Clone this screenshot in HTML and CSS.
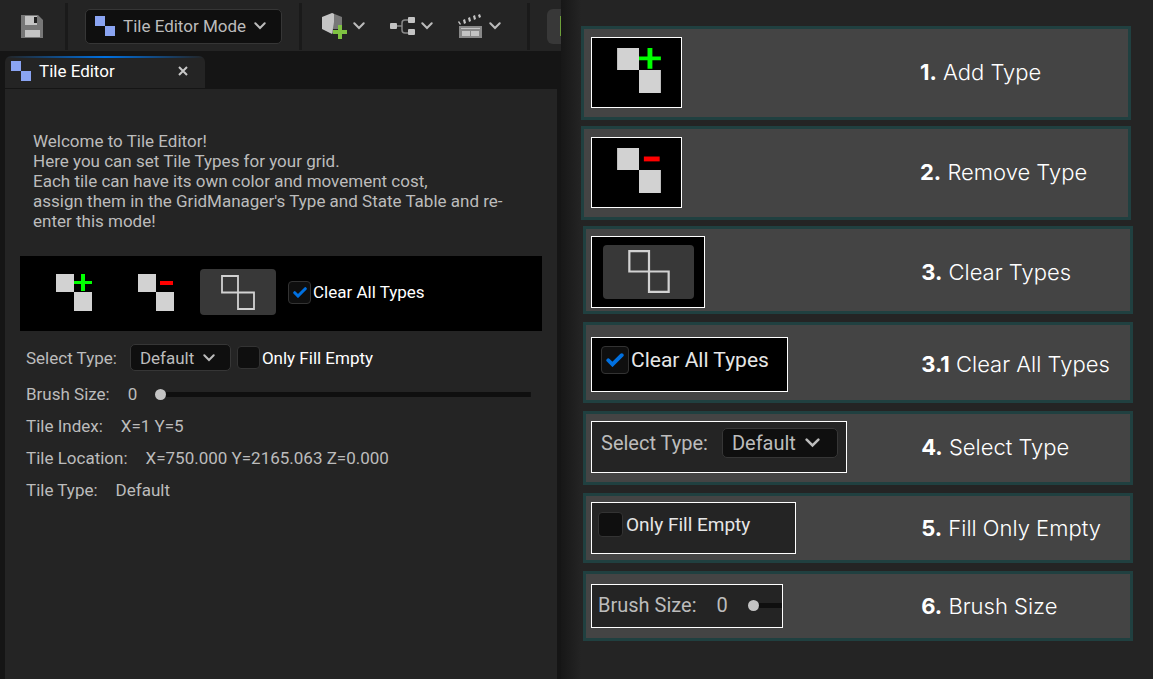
FILE: index.html
```html
<!DOCTYPE html>
<html lang="en">
<head>
<meta charset="utf-8">
<title>Tile Editor</title>
<link rel="stylesheet" href="styles.css">
</head>
<body>
<svg class="defs" aria-hidden="true">
  <symbol id="chevron" viewBox="0 0 12 8"><path d="M1.3 1.3 6 6l4.700-4.700" fill="none" stroke="currentColor" stroke-width="2" stroke-linecap="round"/></symbol>
  <symbol id="check" viewBox="0 0 14 11"><path d="M1.700 5.700 5 9l7.300-7.300" fill="none" stroke="#0070e0" stroke-width="3" stroke-linecap="round"/></symbol>
  <symbol id="tiles" viewBox="0 0 20 20"><path d="M0 0h10v10H0zM10 10h10v10H10z" fill="#8aa4f2"/></symbol>
  <symbol id="add" viewBox="0 0 36 37"><path d="M0 0h18v18H0zM18 18h18v19H18z" fill="#d2d2d2"/><path d="M25 0h4v7h7v3h-7v7h-4v-7h-7V7h7z" fill="#0f0"/></symbol>
  <symbol id="remove" viewBox="0 0 36 37"><path d="M0 0h18v18H0zM18 18h18v19H18z" fill="#d2d2d2"/><path d="M22 7h13v4H22z" fill="#f00"/></symbol>
  <symbol id="clear" viewBox="0 0 34 35"><path d="M1 1h16v16.500H1zM17 17.500h16V34H17z" fill="none" stroke="#d2d2d2" stroke-width="1.800"/></symbol>
</svg>
<div class="screen">
  <main class="editor">
    <header class="toolbar">
      <button class="tool save" aria-label="Save">
        <svg width="22" height="23" viewBox="0 0 22 23"><path d="M0 0h17l5 5v18H0z" fill="#777"/><path d="M4 1h12v9H4zM4 15h15v7H4z" fill="#c4c4c4"/><path d="M13 2h3v6h-3z" fill="#202020"/></svg>
      </button>
      <span class="divider"></span>
      <button class="mode">
        <svg width="20" height="20"><use href="#tiles"/></svg>
        <span>Tile Editor Mode</span>
        <svg width="12" height="8"><use href="#chevron"/></svg>
      </button>
      <span class="divider"></span>
      <div class="tools">
        <button class="tool" aria-label="Add to project">
          <svg width="26" height="26" viewBox="0 0 26 26"><path d="M10 0 20 4v8h-4v4h-5v4l-1 1V9z" fill="#777"/><path d="M0 4 10 0l2 1v8l-2 12-10-5z" fill="#c4c4c4"/><path d="M16 12h4v5h5v4h-5v5h-4v-5h-5v-4h5z" fill="#7fc242"/></svg>
          <svg width="12" height="8"><use href="#chevron"/></svg>
        </button>
        <button class="tool" aria-label="Blueprints">
          <svg width="26" height="20" viewBox="0 0 26 20"><path d="M7 10h5M18 4h-3q-3 0-3 3v7q0 3 3 3h3" fill="none" stroke="#888" stroke-width="1.500"/><rect y="7" width="7" height="6" rx="1" fill="#c4c4c4"/><rect x="18" y="1" width="7" height="6" rx="1" fill="#c4c4c4"/><rect x="18" y="13" width="7" height="6" rx="1" fill="#c4c4c4"/></svg>
          <svg width="12" height="8"><use href="#chevron"/></svg>
        </button>
        <button class="tool" aria-label="Cinematics">
          <svg width="26" height="26" viewBox="0 0 26 26"><path d="M1 13h23v12H1z" fill="#888"/><path d="M3 15h19v1H3zM4 18h8v5H4zM13 18h8v5h-8z" fill="#c4c4c4"/><path d="M0 9l1-1 2 3-1 1zM5 7l2-1 1 4-2 1zM10 5l2-1 1 4-2 1zM15 3l2-1 1 4-2 1zM20 2l2-1 1 3-2 1z" fill="#c4c4c4"/></svg>
          <svg width="12" height="8"><use href="#chevron"/></svg>
        </button>
      </div>
      <span class="divider"></span>
      <button class="play" aria-label="Play"></button>
    </header>
    <nav class="tabs">
      <div class="tab">
        <svg width="20" height="20"><use href="#tiles"/></svg>
        <span>Tile Editor</span>
        <button class="close" aria-label="Close tab"><svg width="10" height="10" viewBox="0 0 10 10"><path d="M1 1l8 8M9 1l-8 8" stroke="#c8c8c8" stroke-width="2"/></svg></button>
      </div>
    </nav>
    <section class="panel">
      <p class="intro">Welcome to Tile Editor!<br>Here you can set Tile Types for your grid.<br>Each tile can have its own color and movement cost,<br>assign them in the GridManager's Type and State Table and re-<br>enter this mode!</p>
      <div class="actions">
        <button class="action" aria-label="Add type"><svg width="36" height="37"><use href="#add"/></svg></button>
        <button class="action" aria-label="Remove type"><svg width="36" height="37"><use href="#remove"/></svg></button>
        <button class="action active" aria-label="Clear types"><svg width="34" height="35"><use href="#clear"/></svg></button>
        <label class="check"><span class="box"><input type="checkbox" checked><svg width="14" height="11"><use href="#check"/></svg></span>Clear All Types</label>
      </div>
      <div class="row select-row">
        <label for="type">Select Type:</label>
        <span class="drop"><select id="type"><option>Default</option></select><svg width="12" height="8"><use href="#chevron"/></svg></span>
        <label class="check"><span class="box"><input type="checkbox"></span>Only Fill Empty</label>
      </div>
      <div class="row"><label for="brush">Brush Size:</label><output>0</output><input class="slider" id="brush" type="range" min="0" max="10" value="0"></div>
      <div class="row"><span>Tile Index:</span><span>X=1 Y=5</span></div>
      <div class="row"><span>Tile Location:</span><span>X=750.000 Y=2165.063 Z=0.000</span></div>
      <div class="row"><span>Tile Type:</span><span>Default</span></div>
    </section>
  </main>
  <aside class="guide">
    <article class="card tall early">
      <div class="thumb icon black"><svg width="44" height="45"><use href="#add"/></svg></div>
      <h2><b>1.</b> Add Type</h2>
    </article>
    <article class="card tall early">
      <div class="thumb icon black"><svg width="44" height="45"><use href="#remove"/></svg></div>
      <h2><b>2.</b> Remove Type</h2>
    </article>
    <article class="card clear-card">
      <div class="thumb black pressed"><button class="action active" aria-label="Clear types"><svg width="42" height="43"><use href="#clear"/></svg></button></div>
      <h2><b>3.</b> Clear Types</h2>
    </article>
    <article class="card all-card">
      <div class="thumb black all"><label class="check"><span class="box"><input type="checkbox" checked><svg width="18" height="14"><use href="#check"/></svg></span>Clear All Types</label></div>
      <h2><b>3.1</b> Clear All Types</h2>
    </article>
    <article class="card select-card">
      <div class="thumb pick"><label for="type2">Select Type:</label><span class="drop"><select id="type2"><option>Default</option></select><svg width="15" height="10"><use href="#chevron"/></svg></span></div>
      <h2><b>4.</b> Select Type</h2>
    </article>
    <article class="card">
      <div class="thumb fill"><label class="check"><span class="box"><input type="checkbox"></span>Only Fill Empty</label></div>
      <h2><b>5.</b> Fill Only Empty</h2>
    </article>
    <article class="card">
      <div class="thumb brush"><label for="brush2">Brush Size:</label><output>0</output><input class="slider" id="brush2" type="range" min="0" max="10" value="0"></div>
      <h2><b>6.</b> Brush Size</h2>
    </article>
  </aside>
</div>
</body>
</html>
```
FILE: styles.css
```css
* { box-sizing: border-box; }
body {
  margin: 0;
  background: #242424;
  color: #bcbcbc;
  font: 17px/20px Roboto, "Liberation Sans", sans-serif;
}
button, select, input { margin: 0; font: inherit; color: inherit; }
button { padding: 0; border: 0; background: none; }
svg { display: block; flex: none; }
.defs { position: absolute; width: 0; height: 0; }

.screen {
  display: grid;
  grid-template-columns: 561fr 592fr;
  min-height: 100vh;
}
.editor {
  display: flex;
  flex-direction: column;
  min-width: 0;
  background: #151515;
  overflow: hidden;
}

.toolbar {
  display: flex;
  align-items: center;
  height: 51px;
  padding-top: 1px;
  background: #242424;
}
.divider { flex: none; width: 3px; height: 47px; background: #1a1a1a; }
.tool { display: flex; align-items: center; gap: 5px; }
.save { margin: 0 22px 0 21px; }
.mode {
  display: flex;
  align-items: center;
  gap: 8px;
  height: 35px;
  margin: 0 17px;
  padding: 0 15px 0 9px;
  border: 1px solid #363636;
  border-radius: 5px;
  background: #0f0f0f;
  white-space: nowrap;
}
.tools { display: flex; align-items: center; gap: 25px; margin: 0 26px 0 20px; }
.play {
  flex: 1;
  height: 35px;
  margin-left: 17px;
  border-radius: 6px 0 0 6px;
  background: linear-gradient(#6da03a, #6da03a) right / 1px 20px no-repeat #383838;
}

.tabs { padding: 5px 5px 1px; }
.tab {
  display: flex;
  align-items: center;
  gap: 8px;
  width: 200px;
  height: 32px;
  padding: 0 17px 2px 6px;
  border-radius: 6px 6px 0 0;
  background: linear-gradient(90deg, #242424, #0070e0 50%, #242424) top / 100% 2px no-repeat #242424;
  color: #fff;
}
.close { margin-left: auto; }

.panel {
  flex: 1;
  margin: 0 4px 0 5px;
  padding: 42px 15px 20px;
  background: #242424;
}
.intro { margin: 0 0 25px; padding: 0 13px; }
.actions {
  display: flex;
  align-items: center;
  gap: 6px;
  height: 75px;
  margin-bottom: 13px;
  padding: 0 0 3px 16px;
  background: #000;
}
.action {
  display: grid;
  place-items: center;
  width: 76px;
  height: 46px;
  border-radius: 4px;
}
.action.active { background: #383838; }
.actions .check { margin-left: 6px; }
.check { display: flex; align-items: center; gap: 2px; color: #fff; white-space: nowrap; }
.box, .drop { display: grid; align-items: center; }
.box > *, .drop > * { grid-area: 1 / 1; }
.box { justify-items: center; }
.box svg, .drop svg { pointer-events: none; z-index: 1; }
.box input {
  width: 23px;
  height: 23px;
  appearance: none;
  border: 1px solid #333;
  border-radius: 4px;
  background: #0f0f0f;
}
.drop select {
  width: 101px;
  height: 27px;
  padding: 0 9px;
  appearance: none;
  border: 1px solid #363636;
  border-radius: 5px;
  background: #0f0f0f;
}
.drop svg { justify-self: end; margin-right: 16px; }

.row {
  display: flex;
  align-items: center;
  gap: 18px;
  min-height: 32px;
  padding: 0 11px 0 6px;
  white-space: nowrap;
}
.select-row { gap: 6px; min-height: 27px; margin-bottom: 7px; }
.select-row > label:first-child { margin-right: 7px; }

.slider {
  flex: 1;
  min-width: 0;
  height: 12px;
  appearance: none;
  background: linear-gradient(#0f0f0f, #0f0f0f) center / 100% 5px no-repeat;
}
.slider::-webkit-slider-thumb {
  width: 11px;
  height: 11px;
  appearance: none;
  border-radius: 50%;
  background: #c4c4c4;
}

.guide {
  min-width: 0;
  padding: 26px 20px 20px;
  background: linear-gradient(90deg, #171717, #242424 20px);
}
.card {
  display: grid;
  grid-template-columns: 329fr 208fr;
  align-items: center;
  min-height: 70px;
  margin: 0 0 8px 2px;
  padding-left: 5px;
  border: 3px solid #204040;
  background: #444;
}
.early { margin: 0 2px 6px 0; padding-left: 7px; }
.tall { min-height: 94px; padding-bottom: 2px; }
.clear-card { min-height: 88px; padding-top: 3px; }
.all-card { min-height: 81px; padding-top: 3px; }
.select-card { min-height: 74px; padding-bottom: 2px; }
.card h2 {
  margin: 0;
  color: #fff;
  font: 300 22px/30px Inter, "Liberation Sans", sans-serif;
  white-space: nowrap;
}
.card b { font-weight: 700; }

.thumb {
  display: flex;
  align-items: center;
  justify-self: start;
  border: 1px solid #fff;
  background: #242424;
  font-size: 20px;
  white-space: nowrap;
}
.black { background: #000; }
.icon { width: 91px; height: 71px; padding: 0 0 4px 25px; }
.pressed { width: 114px; height: 72px; padding-left: 11px; }
.pressed .action { width: 91px; height: 54px; }
.all { width: 197px; height: 55px; padding: 0 0 8px 9px; font-size: 21px; }
.all .check { color: #e6e6e6; }
.thumb .box input { width: 28px; height: 28px; }
.pick { gap: 14px; width: 256px; height: 52px; padding: 0 0 8px 9px; }
.pick select { width: 116px; height: 30px; }
.pick .drop svg { margin-right: 18px; }
.fill { width: 205px; height: 52px; padding: 0 0 7px 6px; font-size: 19px; }
.thumb.fill .box input { width: 25px; height: 25px; }
.fill .check { gap: 3px; color: #e6e6e6; }
.brush { gap: 20px; width: 192px; height: 44px; padding: 0 0 2px 6px; }
```
